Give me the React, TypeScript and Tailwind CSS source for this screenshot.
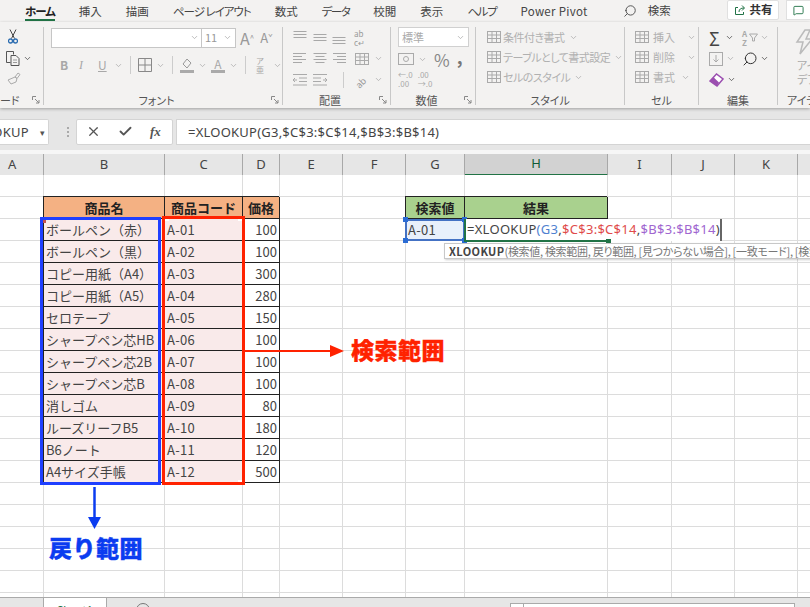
import { Check, ChevronDown, Search, X, MessageSquare } from 'lucide-react'

const JP = 'font-["Noto_Sans_CJK_JP",sans-serif]'
const PALT = '[font-feature-settings:"palt"]'
const COL_TEMPLATE = 'grid-cols-[44px_121px_78px_37px_63px_63px_59px_143px_64px_63px_63px_62px]'

const TABS: [string, string][] = [
  ['ホーム', 'font-bold text-[#222] tracking-[-1px]'],
  ['挿入', ''],
  ['描画', ''],
  ['ページ レイアウト', 'tracking-[-1px]'],
  ['数式', ''],
  ['データ', 'tracking-[-1.5px]'],
  ['校閲', ''],
  ['表示', ''],
  ['ヘルプ', 'tracking-[-1.3px]'],
  ['Power Pivot', 'tracking-[0.3px]'],
]
const COLS = ['A', 'B', 'C', 'D', 'E', 'F', 'G', 'H', 'I', 'J', 'K', 'L']

const ITEMS: [string, string, number][] = [
  ['ボールペン（赤）', 'A-01', 100],
  ['ボールペン（黒）', 'A-02', 100],
  ['コピー用紙（A4）', 'A-03', 300],
  ['コピー用紙（A5）', 'A-04', 280],
  ['セロテープ', 'A-05', 150],
  ['シャープペン芯HB', 'A-06', 100],
  ['シャープペン芯2B', 'A-07', 100],
  ['シャープペン芯B', 'A-08', 100],
  ['消しゴム', 'A-09', 80],
  ['ルーズリーフB5', 'A-10', 180],
  ['B6ノート', 'A-11', 120],
  ['A4サイズ手帳', 'A-12', 500],
]

const GRID = 'border-r border-b border-[#dcdcdc]'
const BOXED = 'border-r border-b border-[#222] shadow-[-1px_-1px_0_0_#222]'

function Chev({ dark }: { dark?: boolean }) {
  return <ChevronDown size={9} strokeWidth={2} className={dark ? 'text-[#444]' : 'text-[#aaa]'} />
}

// stacked lines used by the align buttons
function Lines({ widths, top = 1, align = 'center' }: { widths: number[]; top?: number; align?: 'left' | 'center' | 'right' }) {
  return (
    <svg width="14" height="14" viewBox="0 0 14 14" className="text-[#a8a8a8]">
      {widths.map((w, i) => {
        const x = align === 'left' ? 0 : align === 'right' ? 14 - w : (14 - w) / 2
        return <rect key={i} x={x} y={top + i * 3} width={w} height="1" fill="currentColor" />
      })}
    </svg>
  )
}

function IndentIcon({ flip }: { flip?: boolean }) {
  return (
    <svg width="14" height="14" viewBox="0 0 14 14" fill="none" stroke="#aaa" className={flip ? '-scale-x-100' : ''}>
      <path d="M0 1.500h14M6 5h8M6 8.500h8M0 12h14" />
      <path d="M4 7H0M2 5L0 7l2 2" />
    </svg>
  )
}

function TableIcon() {
  return (
    <svg width="16" height="14" viewBox="0 0 16 14" fill="none" stroke="#aaa" className="shrink-0">
      <rect x="1.5" y="1.5" width="13" height="11" />
      <path d="M1.500 5h13M1.500 8.500h13M6 1.500v11M10.500 1.500v11" />
    </svg>
  )
}

function DialogMark() {
  return (
    <svg width="8" height="8" viewBox="0 0 8 8" fill="none" stroke="#888" className="absolute right-[3px] bottom-[1px]">
      <path d="M.5 4V.5H4M3 3l4 4M7 4v3H4" />
    </svg>
  )
}

function Group({ width, label, mark, labelClass = '', children }: { width: number; label: string; mark?: boolean; labelClass?: string; children?: React.ReactNode }) {
  return (
    <div style={{ width }} className="relative flex h-[78px] shrink-0 flex-col border-r border-[#c8c8c8]">
      <div className="flex-1">{children}</div>
      <div className={`h-[14px] text-[11px] leading-[18px] text-[#555] ${mark ? 'pr-[13px]' : ''} ${labelClass || 'text-center'}`}>{label}</div>
      {mark && <DialogMark />}
    </div>
  )
}

function StyleRow({ text }: { text: string }) {
  return (
    <div className="flex h-[20px] items-center gap-[1px] whitespace-nowrap text-[11px] tracking-[-0.5px] text-[#b0b0b0]">
      <TableIcon />
      <span>{text}</span>
      <span className="ml-[3px]"><Chev /></span>
    </div>
  )
}

function CellRow({ text, gap }: { text: string; gap: string }) {
  return (
    <div className="flex h-[20px] items-center gap-[3px] whitespace-nowrap text-[11px] text-[#b0b0b0]">
      <TableIcon />
      <span>{text}</span>
      <span className={gap}><Chev /></span>
    </div>
  )
}

function Ribbon() {
  return (
    <div className={`relative z-10 flex h-[86px] shrink-0 bg-[#f3f2f1] pt-[5px] shadow-[0_1px_3px_rgba(0,0,0,0.3)] ${PALT}`}>
      <Group width={44} label="ード" mark labelClass="text-left">
        <div className="flex flex-col items-start pt-[2px]">
          <svg width="10" height="15" viewBox="0 0 10 15" fill="none" stroke="#444" className="ml-[8px]">
            <path d="M2 .5l4.500 9M8 .5l-4.500 9" />
            <circle cx="2.500" cy="12" r="2" stroke="#2b6cb0" strokeWidth="1.300" />
            <circle cx="7.500" cy="12" r="2" stroke="#2b6cb0" strokeWidth="1.300" />
          </svg>
          <div className="ml-[6px] mt-[7px] flex items-center gap-[3px]">
            <svg width="14" height="15" viewBox="0 0 14 15" fill="none" stroke="#555">
              <path d="M.5.500h7v3M.5.500v11h4" />
              <path d="M5 4.500h5l3 3v7H5z" />
              <path d="M7 9h4M7 11.500h4" stroke="#999" />
            </svg>
            <Chev dark />
          </div>
          <svg width="15" height="13" viewBox="0 0 15 13" fill="none" stroke="#aaa" className="ml-[6px] mt-[6px]">
            <path d="M9 5l3-4 2 1.500-3 4zM9 5L2 8l3 4 5-2 1-3.500z" />
          </svg>
        </div>
      </Group>

      <Group width={239} label="フォント" mark>
        <div className="flex h-[19px] items-center pl-[7px] pt-[2px]">
          <div className="flex h-[20px] w-[151px] items-center justify-end border border-[#c6c6c6] bg-white pr-[2px]"><Chev /></div>
          <div className="ml-[-1px] flex h-[20px] w-[35px] items-center justify-between border border-[#c6c6c6] bg-white px-[3px] text-[11px] text-[#999]">11<Chev /></div>
          <span className="ml-[4px] text-[16px] leading-none text-[#999]">A</span>
          <span className="text-[8px] text-[#999]">^</span>
          <span className="ml-[6px] text-[13px] leading-none text-[#999]">A</span>
          <span className="text-[8px] text-[#999]">ˇ</span>
        </div>
        <div className="mt-[8px] flex h-[22px] items-center pl-[16px] text-[12px] text-[#a8a8a8]">
          <b className="w-[19px]">B</b>
          <i className="w-[19px] font-['Liberation_Serif',serif]">I</i>
          <u className="w-[16px]">U</u>
          <Chev />
          <div className="mx-[7px] h-[18px] w-px bg-[#ccc]" />
          <svg width="14" height="14" viewBox="0 0 14 14" fill="none" stroke="#888"><path d="M.5.500h13v13H.5zM7 .5v13M.5 7h13" /></svg>
          <span className="ml-[4px]"><Chev /></span>
          <div className="mx-[7px] h-[18px] w-px bg-[#ccc]" />
          <svg width="14" height="15" viewBox="0 0 14 15" fill="none" stroke="#999">
            <path d="M3 6l4-5 4 4-4 5z" />
            <rect x="0" y="12" width="14" height="3" fill="#aaa" stroke="none" />
          </svg>
          <span className="ml-[4px]"><Chev /></span>
          <div className="ml-[4px] flex w-[14px] flex-col items-center leading-[12px]">
            <span>A</span>
            <span className="h-[3px] w-[14px] bg-[#aaa]" />
          </div>
          <span className="ml-[4px]"><Chev /></span>
          <div className="mx-[7px] h-[18px] w-px bg-[#ccc]" />
          <span className="w-[14px] text-center text-[8px] leading-[9px]">ア<br />亜</span>
          <span className="ml-[6px]"><Chev /></span>
        </div>
      </Group>

      <Group width={108} label="配置" mark>
        <div className="grid grid-cols-[20px_19px_22px_20px_10px] auto-rows-[21px] items-center pl-[10px]">
          <Lines widths={[13, 13, 13]} top={0} />
          <Lines widths={[13, 13, 13]} top={3} />
          <Lines widths={[13, 13, 13]} top={6} />
          <span className="text-[8px] leading-[9px] text-[#999]">ab<br />c↵</span>
          <span />
          <Lines widths={[13, 9, 13, 9]} align="left" />
          <Lines widths={[13, 9, 13, 9]} />
          <Lines widths={[13, 9, 13, 9]} align="right" />
          <TableIcon />
          <Chev />
          <IndentIcon />
          <IndentIcon flip />
          <div className="h-[16px] w-px justify-self-center bg-[#ccc]" />
          <span className="block -rotate-45 text-[9px] leading-none text-[#999]">ab</span>
          <Chev />
        </div>
      </Group>

      <Group width={85} label="数値" mark>
        <div className="pl-[7px]">
          <div className="flex h-[20px] w-[71px] items-center justify-between border border-[#d0d0d0] bg-white px-[3px] text-[11px] text-[#aaa]">
            標準
            <Chev />
          </div>
          <div className="mt-[1px] flex h-[22px] items-center text-[#999]">
            <svg width="18" height="14" viewBox="0 0 18 14" fill="none" stroke="#aaa">
              <rect x=".5" y="1.500" width="15" height="11" />
              <circle cx="8" cy="7" r="2.500" />
            </svg>
            <span className="ml-[2px]"><Chev /></span>
            <span className="ml-[7px] text-[17px] leading-none text-[#888]">%</span>
            <span className="ml-[7px] pb-[6px] text-[18px] font-bold leading-none text-[#777]">,</span>
          </div>
          <div className="flex h-[18px] items-center gap-[5px] text-[8px] leading-[9px] text-[#aaa]">
            <span>←.0<br />.00</span>
            <span>.00<br />→.0</span>
          </div>
        </div>
      </Group>

      <Group width={149} label="スタイル">
        <div className="pl-[10px]">
          <StyleRow text="条件付き書式" />
          <StyleRow text="テーブルとして書式設定" />
          <StyleRow text="セルのスタイル" />
        </div>
      </Group>

      <Group width={74} label="セル">
        <div className="pl-[9px]">
          <CellRow text="挿入" gap="ml-[9px]" />
          <CellRow text="削除" gap="ml-[9px]" />
          <CellRow text="書式" gap="ml-[3px]" />
        </div>
      </Group>

      <Group width={79} label="編集">
        <div className="grid grid-cols-[33px_auto] auto-rows-[21px] items-center pl-[10px] text-[#444]">
          <div className="flex items-center gap-[5px] text-[18px] leading-none">Σ<Chev dark /></div>
          <div className="flex items-center gap-[2px] text-[#aaa]">
            <span className="text-[8px] font-bold leading-[9px]">A<br />Z</span>
            <svg width="9" height="9" viewBox="0 0 9 9" fill="none" stroke="#aaa"><path d="M.5 1h8L5.500 5v3h-2V5z" /></svg>
            <Chev />
          </div>
          <div className="flex items-center gap-[3px]">
            <svg width="14" height="14" viewBox="0 0 14 14" fill="none" stroke="#aaa"><rect x=".5" y=".5" width="13" height="13" /><path d="M7 3v7M4.500 7.500L7 10l2.500-2.500" /></svg>
            <Chev />
          </div>
          <div className="flex items-center gap-[2px]">
            <Search size={16} strokeWidth={1.500} className="-scale-x-100 text-[#333]" />
            <Chev dark />
          </div>
          <div className="flex items-center gap-[3px]">
            <svg width="15" height="14" viewBox="0 0 15 14">
              <path d="M1 8l6.500-7L14 6l-6 7z" fill="#fff" stroke="#9b4fb0" strokeWidth="1.500" />
              <path d="M1 8l3.500-3.700L10 9.500 8 13z" fill="#9b4fb0" />
            </svg>
            <Chev dark />
          </div>
        </div>
      </Group>

      <div className="relative flex h-[78px] flex-1 flex-col items-start overflow-hidden whitespace-nowrap text-[#aaa]">
        <svg width="18" height="26" viewBox="0 0 18 26" fill="none" stroke="#bbb" strokeWidth="1.500" className="ml-[17px] mt-[2px] shrink-0">
          <path d="M10 1L2 13h6l-3 12 12-15h-6l4-9z" />
        </svg>
        <div className="ml-[19px] mt-[3px] text-[11px] leading-[14px]">アイ<br />デア</div>
        <div className="absolute left-[9px] top-[64px] text-[11px] leading-[18px] text-[#555]">アイデア</div>
      </div>
    </div>
  )
}

function FormulaBar() {
  return (
    <div className="flex h-[42px] shrink-0 items-center bg-[#e6e6e6] pt-[5px] font-['Noto_Sans',sans-serif] text-[13px] text-[#444]">
      <div className="relative h-[26px] w-[49px] overflow-hidden rounded-r-[2px] border border-l-0 border-[#d4d4d4] bg-white leading-[25px]">
        <span className="absolute right-[19px] tracking-[0.3px]">XLOOKUP</span>
        <span className="absolute right-[3px] top-0 text-[9px] text-[#555]">▾</span>
      </div>
      <div className="ml-[12px] flex w-[14px] flex-col items-center gap-[2px]">
        <i className="h-[2px] w-[2px] bg-[#aaa]" />
        <i className="h-[2px] w-[2px] bg-[#aaa]" />
        <i className="h-[2px] w-[2px] bg-[#aaa]" />
      </div>
      <div className="ml-[1px] flex h-[26px] w-[97px] items-center gap-[17px] rounded-[2px] border border-[#d4d4d4] bg-white pl-[9px]">
        <X size={15} strokeWidth={2} className="text-[#555]" />
        <Check size={15} strokeWidth={3} className="text-[#555]" />
        <i className="font-['Liberation_Serif',serif] text-[13px] font-bold leading-none text-[#555]">fx</i>
      </div>
      <div className="ml-[3px] h-[26px] flex-1 border border-r-0 border-[#d4d4d4] bg-white pl-[11px] leading-[24px] tracking-[0.23px]">=XLOOKUP(G3,$C$3:$C$14,$B$3:$B$14)</div>
    </div>
  )
}

function ColumnHeaders() {
  return (
    <div className={`grid h-[25px] shrink-0 ${COL_TEMPLATE} bg-[#f6f6f6] pt-[4px] font-['Noto_Sans',sans-serif] text-[13px] text-[#444]`}>
      {COLS.map((c) => (
        <div
          key={c}
          className={`flex items-center border-r border-b border-[#a8a8a8] ${c === 'A' ? 'pl-[8px]' : 'justify-center'} ${
            c === 'H' ? 'border-b-2 border-b-[#217346] bg-[#d2d2d2] text-[#0f5c35]' : 'bg-[#e6e6e6]'
          }`}
        >
          {c}
        </div>
      ))}
    </div>
  )
}

function cellFor(row: number, col: number): { text?: string | number; cls: string } {
  if (row === 1) {
    const head: Record<number, string> = { 1: '商品名', 2: '商品コード', 3: '価格' }
    if (head[col]) return { text: head[col], cls: `${BOXED} bg-[#f4b183] justify-center font-bold text-[#222] text-[13px]` }
    if (col === 6) return { text: '検索値', cls: `${BOXED} bg-[#a9d18e] justify-center font-bold text-[#222] text-[13px]` }
    if (col === 7) return { text: '結果', cls: `${BOXED} bg-[#a9d18e] justify-center font-bold text-[#222] text-[13px]` }
  }
  const item = ITEMS[row - 2]
  if (item) {
    if (col === 1) return { text: item[0], cls: `${BOXED} bg-[#f9eaea] pl-[2px]` }
    if (col === 2) return { text: item[1], cls: `${BOXED} bg-[#f9eaea] pl-[2px] tracking-[0.3px]` }
    if (col === 3) return { text: item[2], cls: `${BOXED} justify-end pr-[2px]` }
  }
  return { cls: GRID }
}

function Handle({ cls }: { cls: string }) {
  return <span className={`absolute ${cls}`} />
}

function Sheet() {
  return (
    <div className={`relative flex-1 overflow-hidden bg-white ${JP} text-[13px] text-[#444]`}>
      <div className={`grid ${COL_TEMPLATE} auto-rows-[22px]`}>
        {Array.from({ length: 20 }).flatMap((_, r) =>
          COLS.map((_c, c) => {
            const cell = cellFor(r, c)
            return (
              <div key={`${r}-${c}`} className={`flex items-center overflow-hidden whitespace-nowrap ${cell.cls}`}>
                {cell.text}
              </div>
            )
          }),
        )}
      </div>

      {/* range outlines */}
      <div className="absolute left-[40px] top-[42px] h-[268px] w-[121px] border-[3px] border-[#1f3fff]" />
      <div className="absolute left-[162px] top-[41px] h-[269px] w-[83px] border-[3px] border-[#ff2200]" />
      <Handle cls="left-[43px] top-[45px] h-[3px] w-[3px] bg-[#c05050]" />
      <Handle cls="left-[165px] top-[44px] h-[2px] w-[4px] bg-white" />
      <Handle cls="left-[238px] top-[44px] h-[2px] w-[4px] bg-white" />
      <Handle cls="left-[165px] top-[305px] h-[2px] w-[4px] bg-white" />
      <Handle cls="left-[238px] top-[305px] h-[2px] w-[4px] bg-white" />

      {/* annotations */}
      <svg width="100" height="14" viewBox="0 0 100 14" className="absolute left-[245px] top-[169px]">
        <path d="M0 7h86" stroke="#ff2200" strokeWidth="2" />
        <path d="M85 1l14 6-14 6z" fill="#ff2200" />
      </svg>
      <div className="absolute left-[351px] top-[158px] text-[23px] font-black leading-[32px] tracking-[0.5px] text-[#ff2200] [-webkit-text-stroke:0.4px_#ff2200]">検索範囲</div>
      <svg width="13" height="44" viewBox="0 0 13 44" className="absolute left-[88px] top-[312px]">
        <path d="M6.500 0v32" stroke="#0b3cf0" strokeWidth="2.500" />
        <path d="M0 30h13L6.500 42z" fill="#0b3cf0" />
      </svg>
      <div className="absolute left-[49px] top-[356px] text-[23px] font-black leading-[32px] tracking-[0.5px] text-[#0b3cf0] [-webkit-text-stroke:0.4px_#0b3cf0]">戻り範囲</div>

      {/* G3 reference */}
      <div className="absolute left-[405px] top-[44px] flex h-[22px] w-[60px] items-center border-2 border-[#4472c4] bg-[#e8f0fb] pl-[1px] tracking-[0.3px] text-[#444]">A-01</div>
      <Handle cls="left-[403px] top-[42px] h-[5px] w-[5px] bg-[#2b6cd4]" />
      <Handle cls="left-[462px] top-[42px] h-[5px] w-[5px] bg-[#2b6cd4]" />
      <Handle cls="left-[403px] top-[63px] h-[5px] w-[5px] bg-[#2b6cd4]" />
      <Handle cls="left-[462px] top-[63px] h-[5px] w-[5px] bg-[#2b6cd4]" />

      {/* H3 in-cell editor */}
      <div className="absolute left-[464px] top-[44px] flex h-[22px] w-[258px] items-center whitespace-nowrap border-l-2 border-r-2 border-l-[#217346] border-r-[#666] bg-white pl-[1px] font-['Noto_Sans',sans-serif] text-[13px] tracking-[0.28px]">
        =XLOOKUP<span className="text-[#4f81d0]">(G3</span>,<span className="text-[#e04b4b]">$C$3:$C$14</span>,<span className="text-[#a066d0]">$B$3:$B$14</span>)
      </div>
      <div className="absolute left-[464px] top-[65px] h-[2px] w-[145px] bg-[#217346]" />
      <Handle cls="left-[606px] top-[64px] h-[5px] w-[5px] bg-[#217346]" />

      {/* function hint */}
      <div className={`absolute left-[444px] top-[68px] flex h-[16px] w-[380px] items-center whitespace-nowrap border border-[#c8c8c8] bg-white pl-[4px] text-[11px] tracking-[-0.3px] text-[#777] shadow-[1px_1px_2px_rgba(0,0,0,0.2)] ${PALT}`}>
        <b className="tracking-[0.4px] text-[#444]">XLOOKUP</b>(検索値, 検索範囲, 戻り範囲, [見つからない場合], [一致モード], [検索モード])
      </div>
    </div>
  )
}

function SheetTabs() {
  return (
    <div className="relative flex h-[10px] shrink-0 border-t border-[#aaa] bg-[#e6e6e6] font-['Noto_Sans',sans-serif]">
      <div className="ml-[43px] h-[9px] w-[64px] overflow-hidden border-x border-[#aaa] bg-white pt-[5px] text-center text-[11px] leading-[14px] text-[#217346]">Sheet1</div>
      <div className="absolute left-[136px] top-[5px] h-[14px] w-[14px] rounded-full border border-[#777]" />
      <div className="absolute left-[510px] top-[5px] h-[8px] w-[285px] border border-[#aaa] bg-white">
        <div className="h-full w-[13px] border-r border-[#aaa]" />
      </div>
    </div>
  )
}

export default function App() {
  return (
    <div className={`flex h-[607px] w-[810px] flex-col overflow-hidden bg-white ${JP}`}>
      <div className={`relative flex h-[22px] shrink-0 items-center gap-[24px] bg-[#f3f2f1] pl-[25px] text-[11.5px] text-[#444] ${PALT}`}>
        {TABS.map(([t, cls]) => (
          <div key={t} className={`relative whitespace-nowrap leading-[22px] ${cls}`}>
            {t}
            {t === 'ホーム' && <span className="absolute inset-x-0 bottom-[1px] h-[2px] bg-[#217346]" />}
          </div>
        ))}
        <div className="ml-[11px] flex items-center gap-[11px] whitespace-nowrap">
          <Search size={14} strokeWidth={1.500} className="-scale-x-100 text-[#444]" />
          <span>検索</span>
        </div>
        <div className="absolute left-[727px] top-0 flex h-[20px] w-[52px] items-center justify-center gap-[4px] rounded-[2px] border border-[#e0e0e0] bg-white font-bold text-[#333]">
          <svg width="12" height="12" viewBox="0 0 12 12" fill="none" stroke="#217346">
            <path d="M4 3.500H1.500v7h8V8M5 8c0-3 2-4 5-4M8 1.500L10.500 4 8 6.500" />
          </svg>
          共有
        </div>
        <div className="absolute left-[786px] top-0 flex h-[20px] w-[30px] items-center border border-[#e0e0e0] bg-white pl-[6px]">
          <MessageSquare size={11} className="text-[#217346]" />
        </div>
      </div>
      <Ribbon />
      <FormulaBar />
      <ColumnHeaders />
      <Sheet />
      <SheetTabs />
    </div>
  )
}
